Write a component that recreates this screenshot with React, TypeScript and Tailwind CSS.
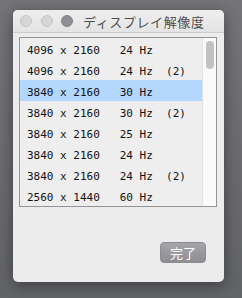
import React from "react";

const rows = [
  "4096 x 2160   24 Hz",
  "4096 x 2160   24 Hz  (2)",
  "3840 x 2160   30 Hz",
  "3840 x 2160   30 Hz  (2)",
  "3840 x 2160   25 Hz",
  "3840 x 2160   24 Hz",
  "3840 x 2160   24 Hz  (2)",
  "2560 x 1440   60 Hz",
];

export default function App() {
  return (
    <div className="w-[242px] h-[298px] overflow-hidden bg-gradient-to-b from-[#747478] to-[#626367] pt-[10px] pl-[13px]">
      <div className="w-[211px] h-[272px] rounded-[5px] bg-[#ececec] shadow-[0_3px_14px_rgba(0,0,0,0.4)] flex flex-col">
        <div className="h-[23px] border-b border-[#cdcdcd] flex items-center pl-[7px] rounded-t-[5px] bg-gradient-to-b from-[#eeeeee] to-[#e4e4e4]">
          <div className="w-[12px] h-[12px] rounded-full bg-[#d6d6d6] border border-[#c4c4c4]" />
          <div className="w-[12px] h-[12px] rounded-full bg-[#d6d6d6] border border-[#c4c4c4] ml-[9px]" />
          <div className="w-[12px] h-[12px] rounded-full bg-[#8f8f93] border border-[#838387] ml-[8px]" />
          <span
            className="ml-[10px] text-[13px] leading-none text-[#4d4d4d] tracking-[0.6px]"
            style={{ fontFamily: '"Noto Sans CJK JP", sans-serif' }}
          >
            ディスプレイ解像度
          </span>
        </div>
        <div className="mt-[4px] ml-[6px] w-[198px] h-[170px] border border-[#949494] bg-[#eeeeee] flex">
          <div className="w-[182px] flex flex-col">
            {rows.map((r, i) => (
              <div
                key={i}
                className={`h-[21px] shrink-0 pt-[4px] pl-[7px] text-[11px] leading-[17px] text-[#111111] whitespace-pre ${
                  i === 2 ? "bg-[#b4d7fe]" : ""
                }`}
                style={{ fontFamily: '"DejaVu Sans Mono", monospace' }}
              >
                {r}
              </div>
            ))}
          </div>
          <div className="w-[14px] border-l border-[#e2e2e2] bg-[#fafafa] pt-[3px] pl-[3px]">
            <div className="w-[8px] h-[28px] rounded-full bg-[#c2c2c2]" />
          </div>
        </div>
        <div className="mt-[35px] self-end mr-[18px] w-[46px] h-[21px] rounded-[4px] border border-[#8c8c90] bg-gradient-to-b from-[#a6a6aa] to-[#8e8e92] flex items-center justify-center">
          <span
            className="text-[13px] leading-none text-white"
            style={{ fontFamily: '"Noto Sans CJK JP", sans-serif' }}
          >
            完了
          </span>
        </div>
      </div>
    </div>
  );
}
